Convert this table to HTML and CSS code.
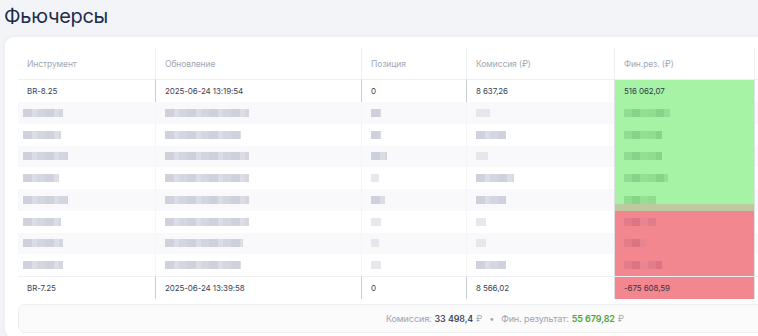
FILE: index.html
```html
<!DOCTYPE html>
<html lang="ru">
<head>
<meta charset="utf-8">
<link rel="stylesheet" href="styles.css">
</head>
<body>
<div class="page">
  <h1 class="title">Фьючерсы</h1>
  <div class="card">
    <div class="table">
      <div class="row head">
        <div class="cell">Инструмент</div>
        <div class="cell">Обновление</div>
        <div class="cell">Позиция</div>
        <div class="cell">Комиссия (₽)</div>
        <div class="cell">Фин.рез. (₽)</div>
        <div class="cell"></div>
      </div>
      <div class="row solid">
        <div class="cell">BR-8.25</div>
        <div class="cell">2025-06-24 13:19:54</div>
        <div class="cell">0</div>
        <div class="cell">8 637,26</div>
        <div class="cell pos">516 062,07</div>
        <div class="cell"></div>
      </div>

      <div class="row blur alt">
        <div class="cell"><i class="px" style="width:40px"></i></div>
        <div class="cell"><i class="px" style="width:84px"></i></div>
        <div class="cell"><i class="px" style="width:10px"></i></div>
        <div class="cell"><i class="px lite" style="width:14px"></i></div>
        <div class="cell pos"><i class="px g" style="width:46px"></i></div>
        <div class="cell"></div>
      </div>
      <div class="row blur">
        <div class="cell"><i class="px" style="width:38px"></i></div>
        <div class="cell"><i class="px" style="width:76px"></i></div>
        <div class="cell"><i class="px" style="width:10px"></i></div>
        <div class="cell"><i class="px" style="width:30px"></i></div>
        <div class="cell pos"><i class="px g" style="width:38px"></i></div>
        <div class="cell"></div>
      </div>
      <div class="row blur alt">
        <div class="cell"><i class="px" style="width:45px"></i></div>
        <div class="cell"><i class="px" style="width:84px"></i></div>
        <div class="cell"><i class="px" style="width:16px"></i></div>
        <div class="cell"><i class="px lite" style="width:12px"></i></div>
        <div class="cell pos"><i class="px g" style="width:38px"></i></div>
        <div class="cell"></div>
      </div>
      <div class="row blur">
        <div class="cell"><i class="px" style="width:36px"></i></div>
        <div class="cell"><i class="px" style="width:84px"></i></div>
        <div class="cell"><i class="px lite" style="width:8px"></i></div>
        <div class="cell"><i class="px" style="width:38px"></i></div>
        <div class="cell pos"><i class="px g" style="width:44px"></i></div>
        <div class="cell"></div>
      </div>
      <div class="row blur alt">
        <div class="cell"><i class="px" style="width:45px"></i></div>
        <div class="cell"><i class="px" style="width:84px"></i></div>
        <div class="cell"><i class="px" style="width:14px"></i></div>
        <div class="cell"><i class="px" style="width:30px"></i></div>
        <div class="cell pos edge"><i class="px g" style="width:32px"></i></div>
        <div class="cell"></div>
      </div>
      <div class="row blur">
        <div class="cell"><i class="px" style="width:38px"></i></div>
        <div class="cell"><i class="px" style="width:84px"></i></div>
        <div class="cell"><i class="px lite" style="width:10px"></i></div>
        <div class="cell"><i class="px lite" style="width:10px"></i></div>
        <div class="cell neg"><i class="px r" style="width:32px"></i></div>
        <div class="cell"></div>
      </div>
      <div class="row blur alt">
        <div class="cell"><i class="px" style="width:40px"></i></div>
        <div class="cell"><i class="px" style="width:78px"></i></div>
        <div class="cell"><i class="px lite" style="width:8px"></i></div>
        <div class="cell"><i class="px lite" style="width:10px"></i></div>
        <div class="cell neg"><i class="px r" style="width:22px"></i></div>
        <div class="cell"></div>
      </div>
      <div class="row blur">
        <div class="cell"><i class="px" style="width:40px"></i></div>
        <div class="cell"><i class="px" style="width:76px"></i></div>
        <div class="cell"><i class="px lite" style="width:10px"></i></div>
        <div class="cell"><i class="px" style="width:30px"></i></div>
        <div class="cell neg"><i class="px r" style="width:38px"></i></div>
        <div class="cell"></div>
      </div>

      <div class="row solid last">
        <div class="cell">BR-7.25</div>
        <div class="cell">2025-06-24 13:39:58</div>
        <div class="cell">0</div>
        <div class="cell">8 566,02</div>
        <div class="cell neg">-675 608,59</div>
        <div class="cell"></div>
      </div>
    </div>
    <div class="summary">
      <span class="lbl">Комиссия:</span>
      <span class="val">33 498,4</span>
      <span class="cur">₽</span>
      <span class="dot">•</span>
      <span class="lbl">Фин. результат:</span>
      <span class="val green">55 679,82</span>
      <span class="cur">₽</span>
    </div>
  </div>
</div>
</body>
</html>
```
FILE: styles.css
```css
html, body {
  margin: 0;
  padding: 0;
  background: #f3f4f8;
  overflow: hidden;
}
body {
  width: 758px;
  height: 336px;
  font-family: Inter, "Noto Sans", "Liberation Sans", sans-serif;
  color: #3b4257;
}
.page {
  width: 754px;
  height: 333px;
  overflow: hidden;
  padding: 3px 0 0 4px;
}
.title {
  margin: 0;
  font-size: 20px;
  line-height: 26px;
  font-weight: 400;
  color: #1e2b4c;
  letter-spacing: -0.3px;
}
.card {
  margin: 8px 0 0 1px;
  width: 974px;
  background: #ffffff;
  border-radius: 9px;
  padding: 11px 13px 5px 13px;
  box-shadow: 0 0 6px rgba(30, 40, 80, 0.05);
}
.table {
  display: flex;
  flex-direction: column;
}
.row {
  display: grid;
  grid-template-columns: 137px 206px 105px 148px 140px 1fr;
  font-size: 8px;
  letter-spacing: -0.1px;
}
.cell {
  display: flex;
  align-items: center;
  padding-left: 9px;
  border-left: 1px solid #eceef2;
  overflow: hidden;
  white-space: nowrap;
}
.cell:first-child {
  border-left: none;
}
.head .cell {
  height: 31px;
  font-size: 8.5px;
  color: #a2a7b3;
  border-left-color: #eff0f4;
}
.solid .cell {
  height: 22px;
  border-top: 1px solid #eef0f3;
  color: #3b4257;
}
.solid .cell:nth-child(2),
.solid .cell:nth-child(3),
.solid .cell:nth-child(4) {
  border-left-color: #c9ccd4;
}
.blur .cell {
  height: 21.75px;
  border-left-color: #f4f5f7;
  padding-left: 9px;
}
.blur.alt .cell {
  background: #f9f9fb;
}
.blur .cell:first-child {
  padding-left: 5px;
}
.px {
  display: block;
  height: 8px;
  background: repeating-linear-gradient(90deg, #c7cad6 0 9px, #d6d8e1 9px 14px, #cdd0db 14px 22px);
  filter: blur(0.6px);
  opacity: 0.85;
}
.px.lite {
  background: #e2e4ea;
}
.px.g {
  background: repeating-linear-gradient(90deg, #8fd98f 0 8px, #80cf86 8px 16px, #93dc93 16px 24px);
}
.px.r {
  background: repeating-linear-gradient(90deg, #e07b87 0 8px, #d9737f 8px 16px, #e68591 16px 24px);
}
.row .cell.pos {
  background: #a6f3a6;
  border-left-color: #dfe1e6;
  color: #2f3a4f;
}
.row .cell.pos.edge {
  background: linear-gradient(#a6f3a6 0 70%, #bfc9a0 70% 100%);
}
.row .cell.neg {
  background: #f2878f;
  border-left-color: #dfe1e6;
  color: #3a3346;
}
.row .cell.pos + .cell,
.row .cell.neg + .cell {
  border-left-color: #dfe1e6;
}
.summary {
  margin-top: 5px;
  height: 27px;
  border: 1px solid #eceef2;
  border-radius: 7px;
  background: #fbfbfc;
  display: flex;
  align-items: center;
  justify-content: center;
  gap: 3px;
  font-size: 9px;
  letter-spacing: -0.1px;
}
.lbl {
  color: #9da2ae;
}
.val {
  color: #2a3553;
  font-weight: 500;
}
.val.green {
  color: #45a83c;
  font-weight: 600;
}
.cur {
  color: #a4a8b3;
}
.dot {
  color: #a4a8b3;
  margin: 0 4px;
}
```
